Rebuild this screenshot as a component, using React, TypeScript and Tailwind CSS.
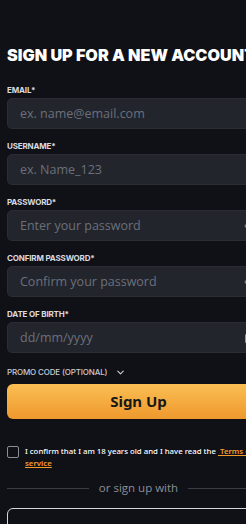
import { ChevronDown, Eye, Calendar } from 'lucide-react';

const label = 'block text-[8px] font-bold uppercase tracking-[-0.02em] text-[#d9dbe0] mb-[3px] leading-[10px]';
const input =
  'w-full h-[31px] rounded-[5px] bg-[#22252c] border border-[#2a2d35] pl-[12px] pr-[30px] text-[12.5px] text-white placeholder:text-[#6c707b] outline-none';

function Field({ name, placeholder, icon }: { name: string; placeholder: string; icon?: 'eye' | 'cal' }) {
  return (
    <div className="mb-[12px]">
      <label className={label}>{name}</label>
      <div className="relative">
        <input className={input} placeholder={placeholder} style={{ fontFamily: '"Open Sans", sans-serif' }} />
        {icon === 'eye' && <Eye size={12} className="absolute right-[14px] top-[10px] text-[#8a8f99]" />}
        {icon === 'cal' && <Calendar size={12} className="absolute right-[14px] top-[10px] text-[#7ea3c9]" />}
      </div>
    </div>
  );
}

export default function App() {
  return (
    <div className="w-[246px] h-[524px] overflow-hidden bg-[#101116]" style={{ fontFamily: 'Inter, sans-serif' }}>
      <div className="w-[277px] px-[7px] pt-[47px]">
        <h1 className="text-[16.2px] font-black text-white leading-[17px] whitespace-nowrap mb-[21px]">
          SIGN UP FOR A NEW ACCOUNT
        </h1>

        <Field name="Email*" placeholder="ex. name@email.com" />
        <Field name="Username*" placeholder="ex. Name_123" />
        <Field name="Password*" placeholder="Enter your password" icon="eye" />
        <Field name="Confirm password*" placeholder="Confirm your password" icon="eye" />
        <Field name="Date of birth*" placeholder="dd/mm/yyyy" icon="cal" />

        <div className="flex items-center gap-[8px] mt-[13px] h-[12px]">
          <span className="text-[8px] font-medium uppercase text-[#c9ccd3] tracking-[-0.02em]">Promo code (optional)</span>
          <ChevronDown size={11} strokeWidth={2.5} className="text-[#c9ccd3]" />
        </div>

        <button
          className="mt-[6px] w-full h-[35px] rounded-[6px] bg-gradient-to-b from-[#fabf52] to-[#ee982c] text-[#17171a] text-[15px] font-bold"
          style={{ fontFamily: '"Noto Sans", sans-serif' }}
        >
          Sign Up
        </button>

        <div className="flex items-start gap-[6px] mt-[26px]" style={{ fontFamily: '"Noto Sans", sans-serif' }}>
          <div className="w-[12px] h-[12px] shrink-0 rounded-[2px] border border-[#8b8e96] mt-[1px]" />
          <p className="text-[7.8px] leading-[12px] text-white font-medium">
            I confirm that I am 18 years old and I have read the{' '}
            <a className="text-[#f39a2c] underline font-semibold">&nbsp;Terms of service</a>
          </p>
        </div>

        <div className="flex items-center gap-[10px] mt-[11px] h-[16px]">
          <div className="flex-1 h-px bg-[#3a3d45]" />
          <span className="text-[11.5px] leading-[16px] text-[#8b8e96]" style={{ fontFamily: '"Open Sans", sans-serif' }}>
            or sign up with
          </span>
          <div className="flex-1 h-px bg-[#3a3d45]" />
        </div>

        <div className="mt-[12px] h-[40px] rounded-[6px] border border-[#d5d7dc]" />
      </div>
    </div>
  );
}
